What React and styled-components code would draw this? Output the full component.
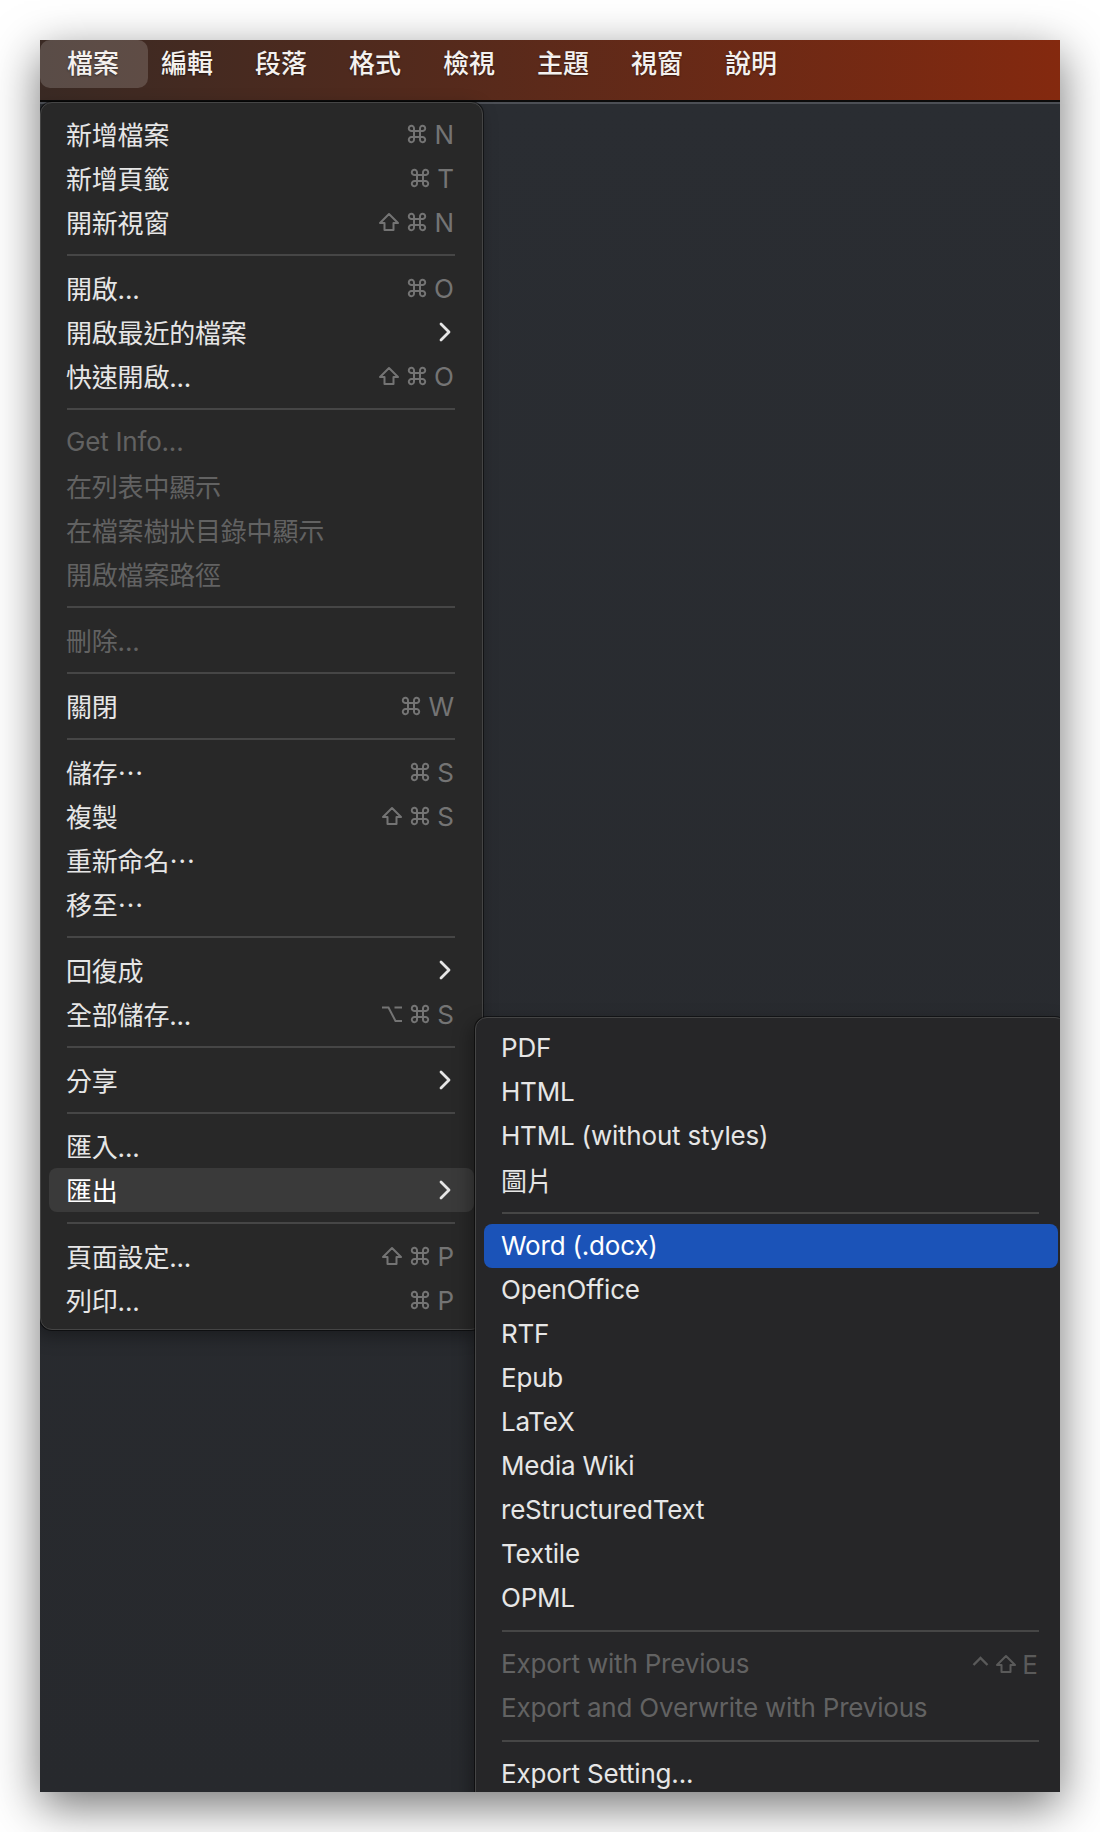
import styled, { createGlobalStyle } from "styled-components";

const GlobalStyle = createGlobalStyle`
  body {
    margin: 0;
    background: #ffffff;
    font-family: "Inter", "Noto Sans CJK TC", sans-serif;
  }
`;

const Page = styled.div`
  padding: 40px;
`;

const Window = styled.div`
  position: relative;
  width: 1020px;
  height: 1752px;
  overflow: hidden;
  background: #2a2d32;
  box-shadow: 0 14px 44px rgba(0, 0, 0, 0.55);
  display: flex;
  flex-direction: column;
`;

const MenuBar = styled.div`
  display: flex;
  align-items: flex-start;
  height: 60px;
  padding-left: 6px;
  background: linear-gradient(90deg, #3a2a24 0%, #552a1c 40%, #84290f 100%);
  border-bottom: 2px solid #0b0b0b;
  flex-shrink: 0;
`;

const BarItem = styled.div`
  height: 48px;
  line-height: 44px;
  padding: ${(p) => (p.active ? "0 29px 0 27px" : "0 21px")};
  margin: ${(p) => (p.active ? "0 -8px 0 -6px" : "0")};
  border-radius: 10px;
  background: ${(p) => (p.active ? "rgba(255, 255, 255, 0.16)" : "transparent")};
  color: #f4f1ef;
  font-family: "Noto Sans CJK TC", sans-serif;
  font-size: 26px;
  font-weight: 500;
  text-shadow: 0 1px 2px rgba(0, 0, 0, 0.45);
`;

const Editor = styled.div`
  flex: 1;
  border-top: 2px solid #4c4f55;
  background: linear-gradient(180deg, #2a2d32 0%, #27292d 100%);
`;

const Menu = styled.div`
  position: absolute;
  box-sizing: border-box;
  left: ${(p) => p.left}px;
  top: ${(p) => p.top}px;
  width: ${(p) => p.width}px;
  height: ${(p) => p.height}px;
  padding: ${(p) => p.pad};
  background: ${(p) => p.bg};
  border: 1px solid #454545;
  border-radius: 12px;
  box-shadow: 0 0 0 1px rgba(0, 0, 0, 0.5), -4px 6px 18px rgba(0, 0, 0, 0.35);
`;

const Row = styled.div`
  display: flex;
  align-items: center;
  height: 44px;
  padding: 0 20px 0 17px;
  border-radius: 8px;
  font-size: 26px;
  letter-spacing: -0.2px;
  color: ${(p) => (p.disabled ? "#626262" : p.active ? "#ffffff" : "#e6e6e6")};
  background: ${(p) => p.active || "transparent"};
  white-space: nowrap;
`;

const Label = styled.span`
  flex: 1;
  margin-top: -2px;
`;

const Sep = styled.div`
  height: 22px;
  display: flex;
  align-items: center;
  padding: 0 19px 0 18px;
  &::after {
    content: "";
    flex: 1;
    height: 2px;
    background: #464646;
  }
`;

const Shortcut = styled.span`
  display: flex;
  align-items: center;
  gap: ${(p) => (p.tight ? 5 : 7)}px;
  color: ${(p) => (p.disabled ? "#5a5a5a" : "#747474")};
  font-size: 26px;
  letter-spacing: 0;
`;

const KeyIcon = styled.svg`
  display: block;
  flex-shrink: 0;
`;

const ChevronIcon = styled.svg`
  display: block;
  margin-right: 2px;
`;

const icons = {
  cmd: (
    <KeyIcon width="20" height="20" viewBox="0 0 20 20">
      <path
        d="M7 7 V4.6 A2.6 2.6 0 1 0 4.6 7 H15.4 A2.6 2.6 0 1 0 13 4.6 V15.4 A2.6 2.6 0 1 0 15.4 13 H4.6 A2.6 2.6 0 1 0 7 15.4 Z"
        fill="none"
        stroke="currentColor"
        strokeWidth="2"
      />
    </KeyIcon>
  ),
  shift: (
    <KeyIcon width="22" height="20" viewBox="0 0 22 20">
      <path
        d="M11 2 L20 11 H15.5 V18 H6.5 V11 H2 Z"
        fill="none"
        stroke="currentColor"
        strokeWidth="2"
        strokeLinejoin="round"
      />
    </KeyIcon>
  ),
  opt: (
    <KeyIcon width="22" height="20" viewBox="0 0 22 20">
      <path
        d="M1 3.5 H7.5 L14.5 17 H21 M13.5 3.5 H21"
        fill="none"
        stroke="currentColor"
        strokeWidth="2"
      />
    </KeyIcon>
  ),
  ctrl: (
    <KeyIcon width="19" height="20" viewBox="0 0 19 20">
      <path
        d="M2.5 11 L9.5 4 L16.5 11"
        fill="none"
        stroke="currentColor"
        strokeWidth="2.4"
      />
    </KeyIcon>
  ),
};

const Chevron = () => (
  <ChevronIcon width="14" height="20" viewBox="0 0 14 20">
    <path
      d="M3 2 L11 10 L3 18"
      fill="none"
      stroke="#e6e6e6"
      strokeWidth="2.8"
      strokeLinecap="round"
      strokeLinejoin="round"
    />
  </ChevronIcon>
);

const bar = ["檔案", "編輯", "段落", "格式", "檢視", "主題", "視窗", "說明"];

const fileMenu = [
  { label: "新增檔案", keys: ["cmd", "N"] },
  { label: "新增頁籤", keys: ["cmd", "T"] },
  { label: "開新視窗", keys: ["shift", "cmd", "N"] },
  "sep",
  { label: "開啟...", keys: ["cmd", "O"] },
  { label: "開啟最近的檔案", sub: true },
  { label: "快速開啟...", keys: ["shift", "cmd", "O"] },
  "sep",
  { label: "Get Info...", disabled: true },
  { label: "在列表中顯示", disabled: true },
  { label: "在檔案樹狀目錄中顯示", disabled: true },
  { label: "開啟檔案路徑", disabled: true },
  "sep",
  { label: "刪除...", disabled: true },
  "sep",
  { label: "關閉", keys: ["cmd", "W"] },
  "sep",
  { label: "儲存⋯", keys: ["cmd", "S"] },
  { label: "複製", keys: ["shift", "cmd", "S"] },
  { label: "重新命名⋯" },
  { label: "移至⋯" },
  "sep",
  { label: "回復成", sub: true },
  { label: "全部儲存...", keys: ["opt", "cmd", "S"] },
  "sep",
  { label: "分享", sub: true },
  "sep",
  { label: "匯入..." },
  { label: "匯出", sub: true, active: "#3a3a3a" },
  "sep",
  { label: "頁面設定...", keys: ["shift", "cmd", "P"] },
  { label: "列印...", keys: ["cmd", "P"] },
];

const exportMenu = [
  { label: "PDF" },
  { label: "HTML" },
  { label: "HTML (without styles)" },
  { label: "圖片" },
  "sep",
  { label: "Word (.docx)", active: "#1b53b8" },
  { label: "OpenOffice" },
  { label: "RTF" },
  { label: "Epub" },
  { label: "LaTeX" },
  { label: "Media Wiki" },
  { label: "reStructuredText" },
  { label: "Textile" },
  { label: "OPML" },
  "sep",
  { label: "Export with Previous", disabled: true, tight: true, keys: ["ctrl", "shift", "E"] },
  { label: "Export and Overwrite with Previous", disabled: true },
  "sep",
  { label: "Export Setting..." },
];

function MenuItems({ items }) {
  return items.map((item, i) =>
    item === "sep" ? (
      <Sep key={i} />
    ) : (
      <Row key={i} disabled={item.disabled} active={item.active}>
        <Label>{item.label}</Label>
        {item.keys && (
          <Shortcut disabled={item.disabled} tight={item.tight}>
            {item.keys.map((k, j) =>
              icons[k] ? <span key={j}>{icons[k]}</span> : <span key={j}>{k}</span>
            )}
          </Shortcut>
        )}
        {item.sub && <Chevron />}
      </Row>
    )
  );
}

export default function App() {
  return (
    <Page>
      <GlobalStyle />
      <Window>
        <MenuBar>
          {bar.map((name, i) => (
            <BarItem key={name} active={i === 0}>
              {name}
            </BarItem>
          ))}
        </MenuBar>
        <Editor />
        <Menu left={0} top={62} width={443} height={1228} pad="9px 8px 8px" bg="#282828">
          <MenuItems items={fileMenu} />
        </Menu>
        <Menu left={435} top={977} width={592} height={860} pad="8px 8px" bg="#262628">
          <MenuItems items={exportMenu} />
        </Menu>
      </Window>
    </Page>
  );
}
